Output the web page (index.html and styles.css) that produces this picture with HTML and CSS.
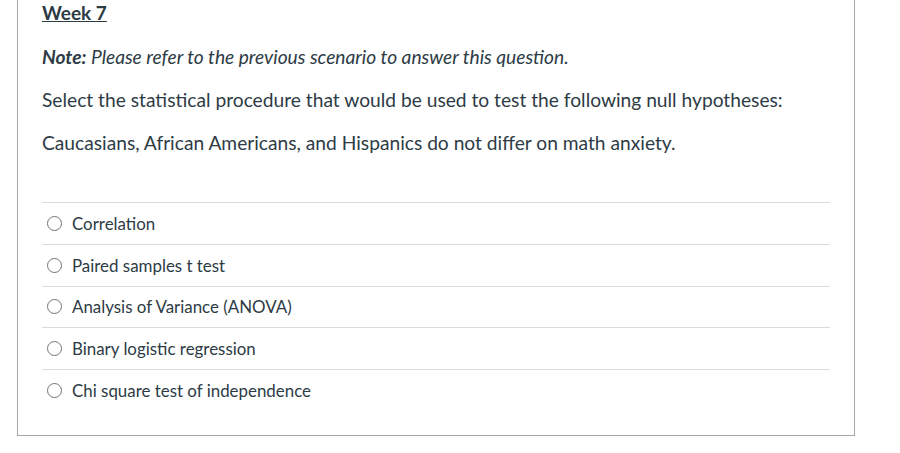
FILE: index.html
```html
<!DOCTYPE html>
<html>
<head>
<meta charset="utf-8">
<link rel="stylesheet" href="styles.css">
</head>
<body>
<div class="question">
  <div class="title">Week 7</div>
  <p class="note"><strong>Note:</strong> Please refer to the previous scenario to answer this question.</p>
  <p class="text">Select the statistical procedure that would be used to test the following null hypotheses:</p>
  <p class="text">Caucasians, African Americans, and Hispanics do not differ on math anxiety.</p>
  <div class="answers">
    <div class="answer"><span class="radio"></span><span class="label">Correlation</span></div>
    <div class="answer"><span class="radio"></span><span class="label">Paired samples t test</span></div>
    <div class="answer"><span class="radio"></span><span class="label">Analysis of Variance (ANOVA)</span></div>
    <div class="answer"><span class="radio"></span><span class="label">Binary logistic regression</span></div>
    <div class="answer"><span class="radio"></span><span class="label">Chi square test of independence</span></div>
  </div>
</div>
</body>
</html>
```
FILE: styles.css
```css
html, body {
  margin: 0;
  padding: 0;
  background: #ffffff;
}
body {
  font-family: Lato, "Open Sans", sans-serif;
  color: #2d3b45;
}
.question {
  margin-left: 17px;
  width: 838px;
  height: 436px;
  box-sizing: border-box;
  border: 1px solid #a5a5a5;
  border-top: none;
  padding: 0 24px 0 24px;
}
.title {
  font-size: 19px;
  font-weight: bold;
  text-decoration: underline;
  line-height: 24px;
  padding-top: 1px;
  height: 25px;
}
.note {
  margin: 19px 0 0 0;
  font-size: 19.2px;
  font-style: italic;
  line-height: 24px;
}
.note strong {
  font-weight: bold;
}
.text {
  margin: 19px 0 0 0;
  font-size: 19.2px;
  line-height: 24px;
}
.answers {
  margin-top: 47px;
}
.answer {
  display: flex;
  align-items: center;
  height: 40.75px;
  border-top: 1px solid #d8dcde;
  padding-left: 5px;
}
.radio {
  flex: none;
  width: 15px;
  height: 15px;
  border: 1.3px solid #737373;
  border-radius: 50%;
  box-sizing: border-box;
  margin-right: 10px;
}
.label {
  font-size: 16.9px;
}
```
